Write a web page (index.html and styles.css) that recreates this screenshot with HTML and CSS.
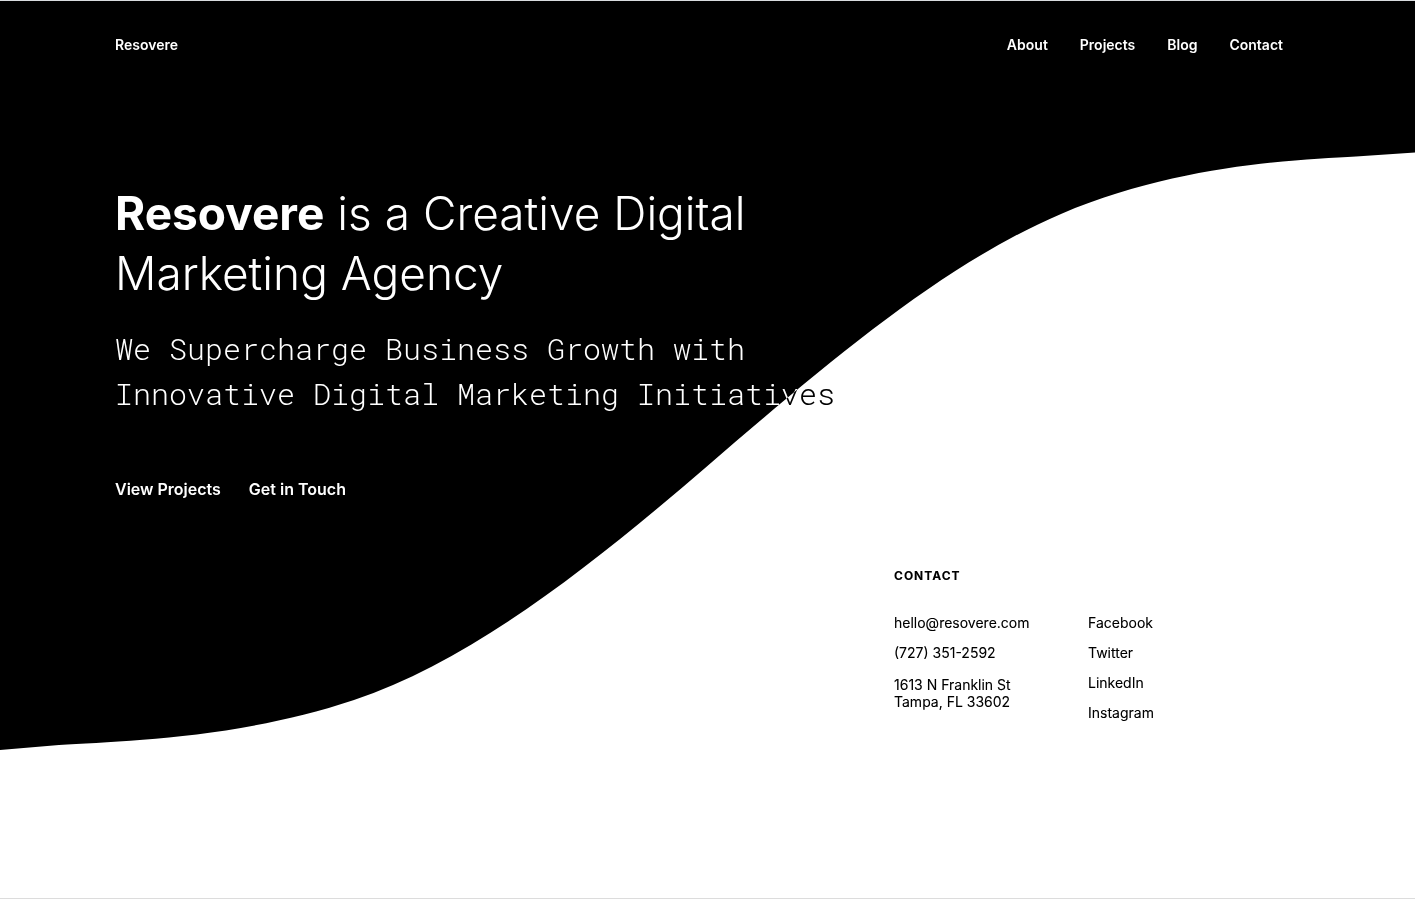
FILE: index.html
```html
<!DOCTYPE html>
<html lang="en">
<head>
<meta charset="utf-8">
<meta name="viewport" content="width=device-width, initial-scale=1">
<title>Resovere</title>
<link rel="stylesheet" href="styles.css">
</head>
<body>
<div class="page">
  <svg class="wave" viewBox="0 1 1415 897" preserveAspectRatio="none" aria-hidden="true">
    <path d="M0 0V750L59 745C118 741 236 739.5 354 700C472 660.5 590 567 708 465.5C826 364 943 264 1061 214C1179 164 1297 160 1356 156.5L1415 152.5V0Z"/>
  </svg>
  <div class="content">
    <header class="header">
      <a class="brand" href="#">Resovere</a>
      <nav class="nav">
        <a href="#">About</a>
        <a href="#">Projects</a>
        <a href="#">Blog</a>
        <a href="#">Contact</a>
      </nav>
    </header>
    <main class="hero">
      <h1 class="title"><strong>Resovere</strong> is a Creative Digital Marketing Agency</h1>
      <p class="subtitle">We Supercharge Business Growth with Innovative Digital Marketing Initiatives</p>
      <div class="actions">
        <a href="#">View Projects</a>
        <a href="#">Get in Touch</a>
      </div>
    </main>
    <footer class="contact">
      <h2 class="contact-title">Contact</h2>
      <div class="contact-columns">
        <div class="list">
          <a href="#">hello@resovere.com</a>
          <a href="#">(727) 351-2592</a>
          <address class="address">1613 N Franklin St<br>Tampa, FL 33602</address>
        </div>
        <div class="list">
          <a href="#">Facebook</a>
          <a href="#">Twitter</a>
          <a href="#">LinkedIn</a>
          <a href="#">Instagram</a>
        </div>
      </div>
    </footer>
  </div>
</div>
</body>
</html>
```

FILE: styles.css
```css
* {
  box-sizing: border-box;
}

body {
  margin: 0;
  background: #fff;
  font-family: Inter, "Liberation Sans", sans-serif;
  font-size: 14px;
}

a {
  color: inherit;
  text-decoration: none;
}

.page {
  position: relative;
  isolation: isolate;
  min-height: 100vh;
  background: #fff;
  border-top: 1px solid #d9dcdf;
  border-bottom: 1px solid #dcdcdc;
}

.wave {
  position: absolute;
  inset: 0;
  width: 100%;
  height: 100%;
}

/* White text inverts to black wherever it crosses the white area. */
.content {
  display: flex;
  flex-direction: column;
  padding: 32px 115px;
  color: #fff;
  mix-blend-mode: difference;
}

.header {
  display: flex;
  justify-content: space-between;
  align-items: center;
  font-weight: 600;
  line-height: 24px;
}

.nav {
  display: flex;
  gap: 32px;
  padding-right: 17px;
}

.hero {
  max-width: 760px;
  padding-top: 126px;
}

.title {
  margin: 0;
  max-width: 680px;
  font-size: 46px;
  font-weight: 300;
  line-height: 60px;
}

.title strong {
  font-weight: 700;
}

.subtitle {
  margin: 23px 0 0;
  font-family: "Roboto Mono", "Liberation Mono", monospace;
  font-size: 30px;
  font-weight: 300;
  line-height: 45px;
}

.actions {
  display: flex;
  gap: 28px;
  margin-top: 61px;
  font-size: 16px;
  font-weight: 600;
  line-height: 24px;
}

.contact {
  align-self: flex-end;
  width: 406px;
  padding-top: 67px;
}

.contact-title {
  margin: 0;
  font-size: 12px;
  font-weight: 700;
  line-height: 16px;
  letter-spacing: 1px;
  text-transform: uppercase;
}

.contact-columns {
  display: grid;
  grid-template-columns: 194px 1fr;
  margin-top: 30px;
}

.list {
  display: flex;
  flex-direction: column;
  align-items: flex-start;
  gap: 13px;
  line-height: 17px;
}

.address {
  margin-top: 2px;
  font-style: normal;
}
```
